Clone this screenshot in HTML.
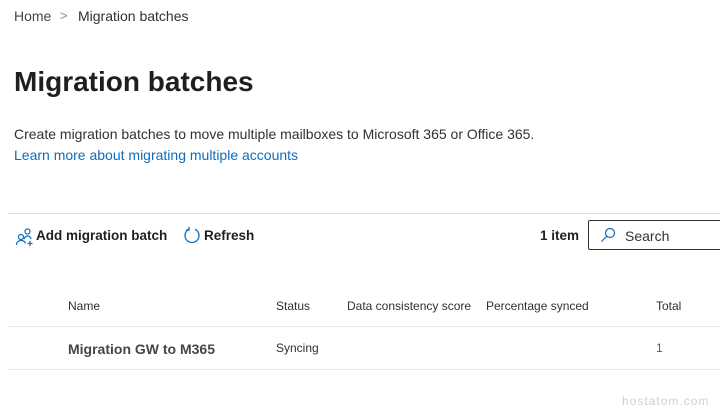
<!DOCTYPE html>
<html><head><meta charset="utf-8"><style>
body{margin:0;width:720px;height:413px;overflow:hidden;background:#fff;font-family:"Liberation Sans",sans-serif;color:#323130;position:relative}
.a{position:absolute;white-space:nowrap}
.t{font-size:13.5px;font-weight:bold;color:#201f1e}
</style></head><body>
<div class="a" style="left:14px;top:8px;font-size:14px;color:#484644">Home</div>
<div class="a" style="left:60px;top:8px;font-size:13px;color:#8a8886">&gt;</div>
<div class="a" style="left:78px;top:8px;font-size:14px;color:#323130">Migration batches</div>
<div class="a" style="left:14px;top:66px;font-size:28px;font-weight:bold;color:#201f1e">Migration batches</div>
<div class="a" style="left:14px;top:126px;font-size:14px;color:#323130">Create migration batches to move multiple mailboxes to Microsoft 365 or Office 365.</div>
<div class="a" style="left:14px;top:147px;font-size:14px;color:#0f6cbd">Learn more about migrating multiple accounts</div>
<div class="a" style="left:8px;top:213px;width:712px;height:1px;background:#e1dfdd"></div>
<svg class="a" style="left:15px;top:227px" width="20" height="20" viewBox="0 0 20 20" fill="none" stroke="#0f6cbd" stroke-width="1.2"><circle cx="6" cy="10" r="2.5"/><path d="M1.5 18c0-3 2-4.5 4.5-4.5s4 1 4.5 3"/><circle cx="12.5" cy="4.5" r="2.5"/><path d="M9 12c.8-2 2-3 3.5-3s3 1 3.5 3"/><path d="M15 14v5M12.5 16.5h5"/></svg>
<div class="a t" style="left:36px;top:228px">Add migration batch</div>
<svg class="a" style="left:182px;top:226px" width="20" height="20" viewBox="0 0 20 20" fill="none" stroke="#0f6cbd" stroke-width="1.3"><path d="M7 3.2A7 7 0 1 0 13 3.2"/><path d="M7 1v3H4"/></svg>
<div class="a t" style="left:204px;top:228px">Refresh</div>
<div class="a t" style="left:540px;top:228px">1 item</div>
<div class="a" style="left:588px;top:220px;width:140px;height:30px;border:1px solid #323130;border-radius:2px;box-sizing:border-box"></div>
<svg class="a" style="left:600px;top:227px" width="16" height="16" viewBox="0 0 16 16" fill="none" stroke="#0f6cbd" stroke-width="1.2"><circle cx="10" cy="6" r="4.5"/><path d="M6.8 9.2L1.5 14.5"/></svg>
<div class="a" style="left:625px;top:228px;font-size:14px;color:#323130">Search</div>
<div class="a" style="left:68px;top:299px;font-size:12px">Name</div>
<div class="a" style="left:276px;top:299px;font-size:12px">Status</div>
<div class="a" style="left:347px;top:299px;font-size:12px">Data consistency score</div>
<div class="a" style="left:486px;top:299px;font-size:12px">Percentage synced</div>
<div class="a" style="left:656px;top:299px;font-size:12px">Total</div>
<div class="a" style="left:8px;top:326px;width:712px;height:1px;background:#edebe9"></div>
<div class="a" style="left:68px;top:341px;font-size:14px;font-weight:bold;color:#484644">Migration GW to M365</div>
<div class="a" style="left:276px;top:341px;font-size:12px">Syncing</div>
<div class="a" style="left:656px;top:341px;font-size:12px;color:#0f6cbd">1</div>
<div class="a" style="left:8px;top:369px;width:712px;height:1px;background:#edebe9"></div>
<div class="a" style="left:622px;top:394px;font-size:12px;color:#d0d0d0;letter-spacing:1px">hostatom.com</div>
</body></html>
